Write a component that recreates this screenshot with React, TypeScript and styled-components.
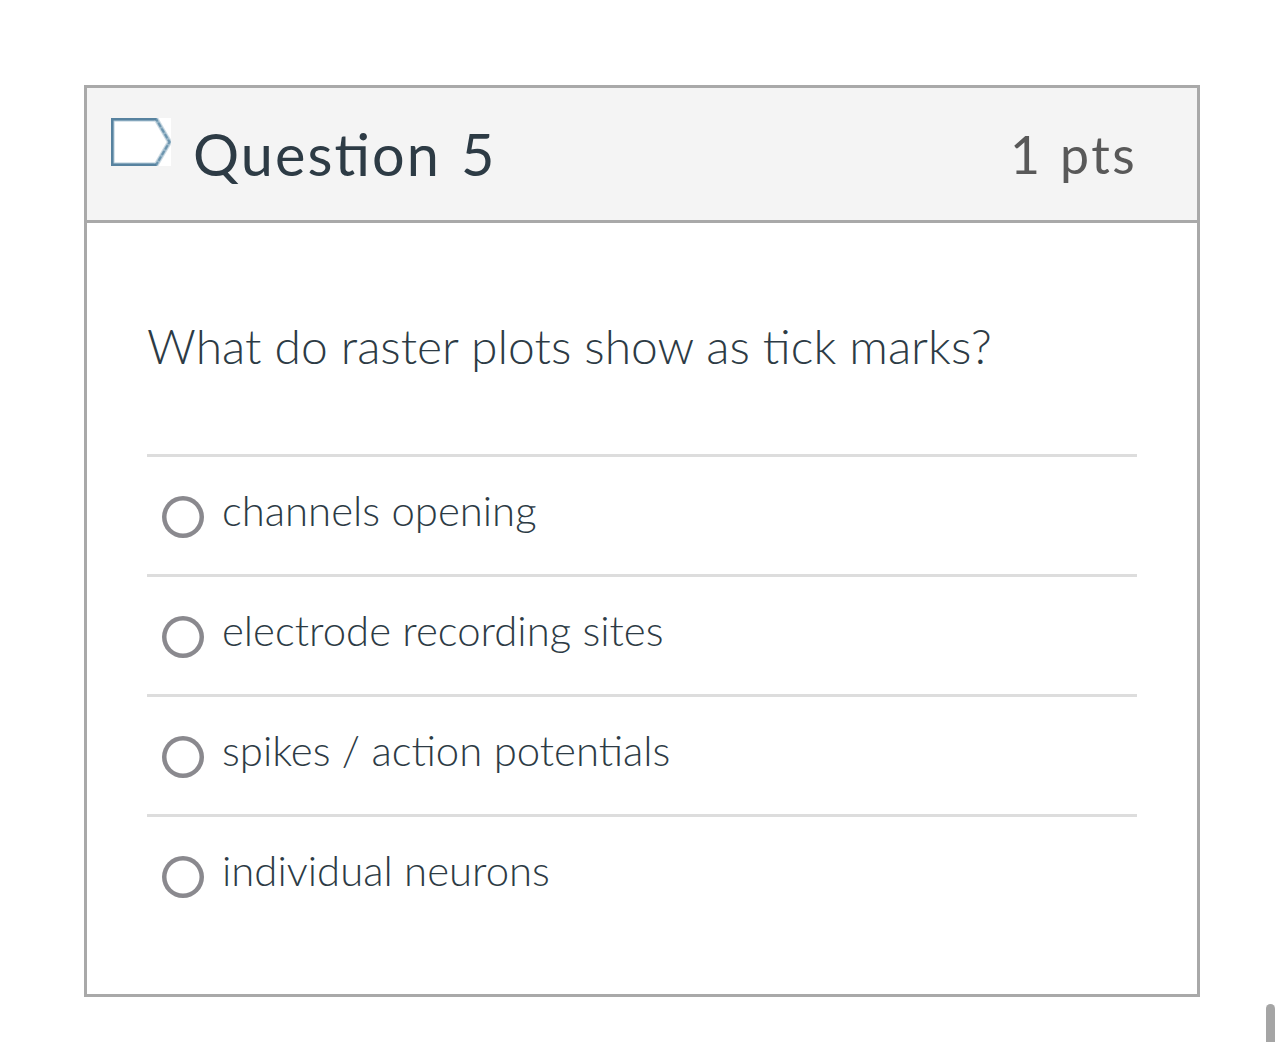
import { styled, createGlobalStyle } from "styled-components";
import { useState } from "react";

const GlobalStyle = createGlobalStyle`
  * {
    box-sizing: border-box;
  }
  html, body {
    margin: 0;
    padding: 0;
    background: #ffffff;
    overflow: hidden;
  }
`;
const Page = styled.main`
  width: 1284px;
  height: 1042px;
  padding: 85px 84px 0;
  position: relative;
  overflow: hidden;
  font-family: Lato, "Liberation Sans", sans-serif;
  color: #2d3b45;
`;
const Card = styled.section`
  height: 912px;
  border: 3px solid #a9a9a9;
`;
const Header = styled.header`
  height: 135px;
  display: flex;
  align-items: flex-start;
  background: #f4f4f4;
  border-bottom: 3px solid #a9a9a9;
  padding: 30px 60px 0 24px;
`;
const FlagIcon = styled.svg`
  width: 60px;
  height: 48px;
  flex: none;
`;
const Title = styled.h1`
  margin: 0 0 0 22px;
  font-size: 57.6px;
  font-weight: 400;
  line-height: 71px;
  letter-spacing: 2.1px;
  word-spacing: 3px;
  font-feature-settings: "liga" 1; // letter-spacing turns the "ti" ligature off
  flex: 1;
  white-space: nowrap;
`;
const Points = styled.span`
  font-size: 51.8px;
  line-height: 73px;
  letter-spacing: 2.4px;
  word-spacing: 2px;
  color: #595959;
  white-space: nowrap;
`;
const Body = styled.div`
  padding: 87px 60px 0;
`;
const Prompt = styled.p`
  margin: 0;
  height: 144px;
  font-size: 47.97px;
  font-weight: 300;
  line-height: 72px;
  white-space: nowrap;
`;
const Answers = styled.div`
  display: flex;
  flex-direction: column;
`;
const Answer = styled.label`
  height: 120px;
  border-top: 3px solid #dddddd;
  display: flex;
  align-items: flex-start;
  padding: 39px 0 0 15px;
  cursor: pointer;
`;
const Radio = styled.input`
  appearance: none;
  width: 42px;
  height: 42px;
  margin: 0;
  flex: none;
  border: none;
  border-radius: 50%;
  background: #ffffff;
  box-shadow: inset 0 0 0 4.5px #8a898e;
  &:checked {
    background: radial-gradient(#2d3b45 35%, #ffffff 38%);
  }
`;
const AnswerText = styled.span`
  margin: -12px 0 0 18px;
  font-size: 41.9px;
  font-weight: 300;
  line-height: 52px;
  white-space: nowrap;
`;
const ScrollThumb = styled.div`
  position: absolute;
  left: 1266px;
  top: 1004px;
  width: 9px;
  height: 60px;
  border-radius: 5px;
  background: #a5a5a5;
`;

const answers = ["channels opening", "electrode recording sites", "spikes / action potentials", "individual neurons"];

function App(){
  const [picked, setPicked] = useState("");

  return (
    <>
      <GlobalStyle />
      <Page>
        <Card>
          <Header>
            <FlagIcon viewBox="0 0 60 48">
              <rect width="60" height="48" fill="#ffffff" />
              {/* pale inner edge under the darker outline */}
              <path d="M44 1.75H1.75V46.25H44" fill="none" stroke="#b3cad8" strokeWidth="3.5" />
              <path d="M44.5 0L58.5 24L44.5 48" fill="none" stroke="#d0dde5" strokeWidth="5" />
              <path d="M44.5 0L58.5 24L44.5 48" fill="none" stroke="#9db9ca" strokeWidth="3" />
              <path d="M44.5 0L58.5 24L44.5 48" fill="none" stroke="#6b94ae" strokeWidth="2" strokeDasharray="3 3.5" strokeLinecap="round" />
              <path d="M45 1.25H1.25V46.75H45" fill="none" stroke="#57829f" strokeWidth="2.5" />
            </FlagIcon>
            <Title>Question 5</Title>
            <Points>1 pts</Points>
          </Header>
          <Body>
            <Prompt>What do raster plots show as tick marks?</Prompt>
            <Answers>
              {answers.map((answer) => (
                <Answer key={answer}>
                  <Radio type="radio" name="answer" checked={picked === answer} onChange={() => setPicked(answer)} />
                  <AnswerText>{answer}</AnswerText>
                </Answer>
              ))}
            </Answers>
          </Body>
        </Card>
        <ScrollThumb />
      </Page>
    </>
  );
}
export default App;
